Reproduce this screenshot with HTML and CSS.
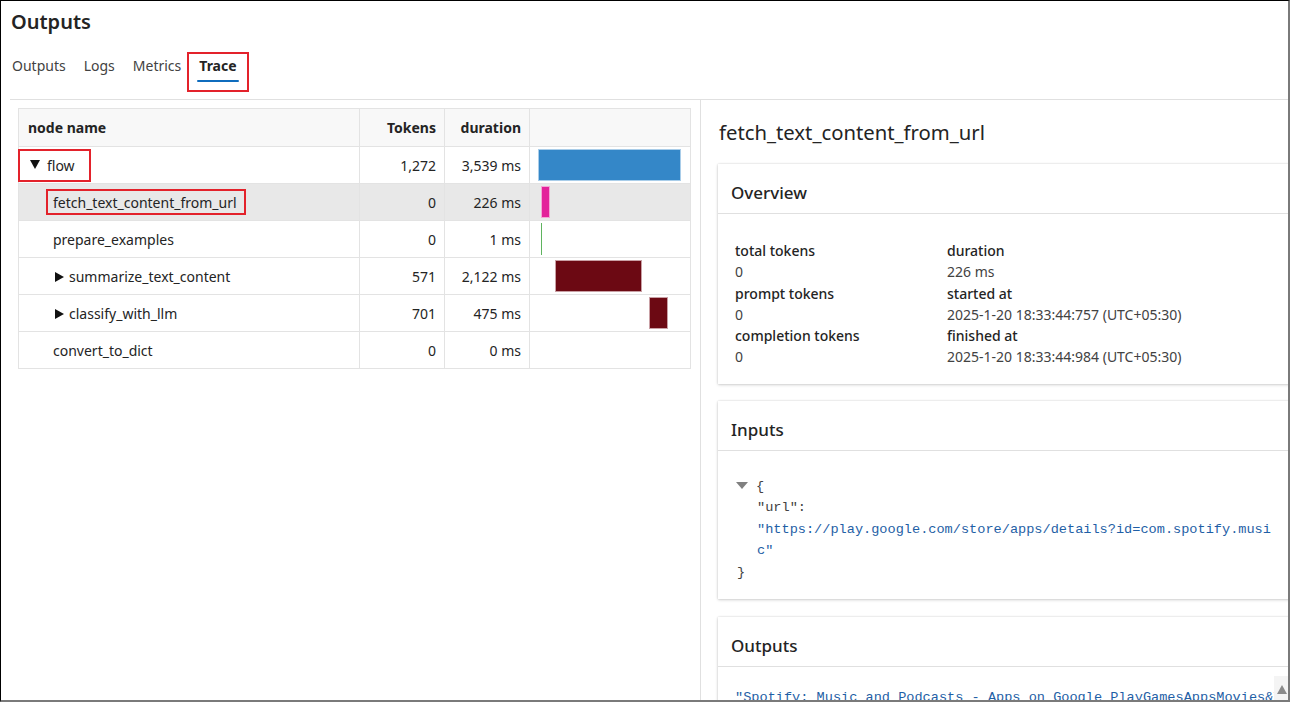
FILE: index.html
```html
<!DOCTYPE html>
<html lang="en">
<head>
<meta charset="utf-8">
<title>Outputs</title>
<link rel="stylesheet" href="styles.css">
</head>
<body>
<div class="frame">
  <header class="head">
    <h1 class="title">Outputs</h1>
    <nav class="tabs">
      <span class="tab">Outputs</span>
      <span class="tab">Logs</span>
      <span class="tab">Metrics</span>
      <span class="tab tab-active"><span class="tab-label">Trace</span></span>
    </nav>
  </header>
  <div class="split">
    <section class="left">
      <table class="trace">
        <thead>
          <tr>
            <th class="c-name">node name</th>
            <th class="c-num">Tokens</th>
            <th class="c-num">duration</th>
            <th class="c-bar"></th>
          </tr>
        </thead>
        <tbody>
          <tr>
            <td class="c-name"><span class="mark mark-flow"><span class="caret-down"></span>flow</span></td>
            <td class="c-num">1,272</td>
            <td class="c-num">3,539 ms</td>
            <td class="c-bar"><div class="track"><div class="bar bar-blue" style="margin-left:0%;width:100%"></div></div></td>
          </tr>
          <tr class="selected">
            <td class="c-name child"><span class="mark mark-node">fetch_text_content_from_url</span></td>
            <td class="c-num">0</td>
            <td class="c-num">226 ms</td>
            <td class="c-bar"><div class="track"><div class="bar bar-pink" style="margin-left:2.1%;width:6.4%"></div></div></td>
          </tr>
          <tr>
            <td class="c-name child">prepare_examples</td>
            <td class="c-num">0</td>
            <td class="c-num">1 ms</td>
            <td class="c-bar"><div class="track"><div class="bar bar-green" style="margin-left:2.1%;width:1px"></div></div></td>
          </tr>
          <tr>
            <td class="c-name child"><span class="caret-right"></span>summarize_text_content</td>
            <td class="c-num">571</td>
            <td class="c-num">2,122 ms</td>
            <td class="c-bar"><div class="track"><div class="bar bar-red" style="margin-left:12%;width:60.5%"></div></div></td>
          </tr>
          <tr>
            <td class="c-name child"><span class="caret-right"></span>classify_with_llm</td>
            <td class="c-num">701</td>
            <td class="c-num">475 ms</td>
            <td class="c-bar"><div class="track"><div class="bar bar-red" style="margin-left:77.5%;width:13.4%"></div></div></td>
          </tr>
          <tr>
            <td class="c-name child">convert_to_dict</td>
            <td class="c-num">0</td>
            <td class="c-num">0 ms</td>
            <td class="c-bar"></td>
          </tr>
        </tbody>
      </table>
    </section>
    <section class="right">
      <h2 class="node-title">fetch_text_content_from_url</h2>
      <div class="card">
        <div class="card-head">Overview</div>
        <div class="card-body overview">
          <div class="ov-col">
            <div class="ov-label">total tokens</div>
            <div class="ov-value">0</div>
            <div class="ov-label">prompt tokens</div>
            <div class="ov-value">0</div>
            <div class="ov-label">completion tokens</div>
            <div class="ov-value">0</div>
          </div>
          <div class="ov-col">
            <div class="ov-label">duration</div>
            <div class="ov-value">226 ms</div>
            <div class="ov-label">started at</div>
            <div class="ov-value">2025-1-20 18:33:44:757 (UTC+05:30)</div>
            <div class="ov-label">finished at</div>
            <div class="ov-value">2025-1-20 18:33:44:984 (UTC+05:30)</div>
          </div>
        </div>
      </div>
      <div class="card">
        <div class="card-head">Inputs</div>
        <div class="card-body json">
          <div class="json-line"><span class="json-toggle"></span>{</div>
          <div class="json-inner">
            <div class="json-key">"url":</div>
            <div class="json-str">"https://play.google.com/store/apps/details?id=com.spotify.music"</div>
          </div>
          <div class="json-close">}</div>
        </div>
      </div>
      <div class="card card-last">
        <div class="card-head">Outputs</div>
        <div class="card-body out">
          <div class="json-str out-str">"Spotify: Music and Podcasts - Apps on Google PlayGamesAppsMovies&amp;TVBooksKids"</div>
          <div class="scroll-up"></div>
        </div>
      </div>
    </section>
  </div>
</div>
</body>
</html>
```

FILE: styles.css
```css
* { box-sizing: border-box; }
html, body {
  margin: 0;
  padding: 0;
  width: 1290px;
  height: 702px;
  overflow: hidden;
  background: #ffffff;
}
body {
  font-family: "Noto Sans", "Open Sans", sans-serif;
  font-size: 14px;
  color: #242424;
}
.frame {
  width: 1290px;
  height: 702px;
  border-top: 1px solid #000;
  border-left: 1px solid #000;
  border-right: 2px solid #7a7a7a;
  border-bottom: 2px solid #7a7a7a;
  overflow: hidden;
  display: flex;
  flex-direction: column;
}
.head {
  margin-left: 9px;
  border-bottom: 1px solid #e0e0e0;
  height: 99px;
  flex: none;
}
.title {
  margin: 0;
  padding: 7px 0 0 1px;
  font-size: 20px;
  font-weight: 600;
  line-height: 27px;
  color: #242424;
}
.tabs {
  display: flex;
  align-items: flex-start;
  gap: 18px;
  margin-top: 17px;
  padding-left: 2px;
  height: 40px;
}
.tab {
  font-size: 14px;
  color: #424242;
  line-height: 20px;
  padding-top: 4px;
}
.tab-active {
  font-weight: 700;
  color: #242424;
  border: 2px solid #e3222b;
  height: 40px;
  padding: 2px 10px 0 10px;
  margin: 0 -12px;
  display: flex;
  align-items: flex-start;
}
.tab-label {
  position: relative;
  display: inline-block;
}
.tab-label::after {
  content: "";
  position: absolute;
  left: -2px;
  right: -2px;
  bottom: -6px;
  height: 2px;
  background: #0f6cbd;
  border-radius: 1px;
}
.split {
  flex: 1;
  display: flex;
  min-height: 0;
}
.left {
  width: 700px;
  flex: none;
  border-right: 1px solid #e0e0e0;
  padding: 8px 10px 0 17px;
}
.trace {
  border-collapse: collapse;
  width: 672px;
  table-layout: fixed;
  font-size: 14px;
}
.trace th, .trace td {
  border: 1px solid #e3e3e3;
  padding: 0 8px;
  height: 37px;
  white-space: nowrap;
}
.trace th {
  background: #f8f8f8;
  font-weight: 700;
  height: 38px;
  color: #242424;
}
.trace td { color: #242424; }
.c-name { text-align: left; width: 341px; }
.trace th.c-name { padding-left: 9px; }
.c-num { text-align: right; width: 85px; }
.c-bar { width: 161px; padding: 0 9px 0 8px !important; }
.child { padding-left: 34px !important; }
.selected td { background: #e8e8e8; }
.caret-down {
  display: inline-block;
  width: 0;
  height: 0;
  border-left: 5px solid transparent;
  border-right: 5px solid transparent;
  border-top: 9px solid #111;
  margin-right: 7px;
  position: relative;
  top: -1px;
}
.caret-right {
  display: inline-block;
  width: 0;
  height: 0;
  border-top: 5px solid transparent;
  border-bottom: 5px solid transparent;
  border-left: 9px solid #111;
  margin: 0 5px 0 2px;
  position: relative;
  top: 0;
}
.mark {
  display: inline-flex;
  align-items: center;
  border: 2px solid #e3222b;
}
.mark-flow {
  margin-left: -9px;
  padding: 0 14px 0 10px;
  height: 33px;
}
.mark-node {
  margin-left: -7px;
  padding: 0 7px 0 5px;
  height: 26px;
}
.track {
  height: 32px;
  display: flex;
}
.bar {
  height: 32px;
  flex: none;
}
.bar-blue { background: #3487c8; border: 1px solid #a9cde9; }
.bar-pink { background: #e3219a; border: 1px solid #f4a6d6; }
.bar-green { background: #5fb35f; }
.bar-red { background: #6c0913; border: 1px solid #c9a0a5; }
.right {
  flex: 1;
  min-width: 0;
  padding: 0 0 0 17px;
  overflow: hidden;
}
.node-title {
  margin: 0;
  padding-top: 18px;
  padding-left: 1px;
  font-size: 20.3px;
  font-weight: 400;
  line-height: 28px;
  color: #242424;
}
.card {
  width: 640px;
  margin-top: 17px;
  background: #fff;
  box-shadow: 0 0 2px rgba(0,0,0,0.14), 0 1px 3px rgba(0,0,0,0.16);
}
.node-title + .card { margin-top: 18px; }
.card-last { margin-top: 18px; }
.card-head {
  height: 50px;
  border-bottom: 1px solid #e0e0e0;
  padding: 8px 13px 0 13px;
  display: flex;
  align-items: center;
  font-size: 17px;
  font-weight: 500;
  color: #242424;
}
.card-body { padding: 26px 17px 16px 17px; }
.overview {
  display: flex;
  line-height: 21.3px;
}
.ov-col:first-child { width: 212px; }
.ov-label { font-weight: 500; color: #242424; }
.ov-value { color: #424242; }
.json {
  font-family: "Liberation Mono", "DejaVu Sans Mono", monospace;
  font-size: 13.6px;
  line-height: 21.5px;
  color: #424242;
  padding: 25px 17px 16px 18px;
}
.json-line { display: flex; align-items: center; }
.json-toggle {
  width: 0;
  height: 0;
  border-left: 6px solid transparent;
  border-right: 6px solid transparent;
  border-top: 7px solid #808080;
  margin-right: 8px;
  position: relative;
  top: -1px;
}
.json-inner { padding-left: 21px; width: 540px; }
.json-str {
  color: #1f5fa6;
  word-break: break-all;
}
.json-close { padding-left: 1px; }
.out {
  position: relative;
  height: 60px;
  padding-top: 20px;
  font-family: "Liberation Mono", "DejaVu Sans Mono", monospace;
  font-size: 13.6px;
  line-height: 21.5px;
}
.out-str { white-space: nowrap; }
.scroll-up {
  position: absolute;
  left: 556px;
  top: 9px;
  width: 16px;
  height: 30px;
  background: #f4f4f4;
}
.scroll-up::after {
  content: "";
  position: absolute;
  left: 3px;
  top: 9px;
  border-left: 5px solid transparent;
  border-right: 5px solid transparent;
  border-bottom: 9px solid #8a8a8a;
}
```
